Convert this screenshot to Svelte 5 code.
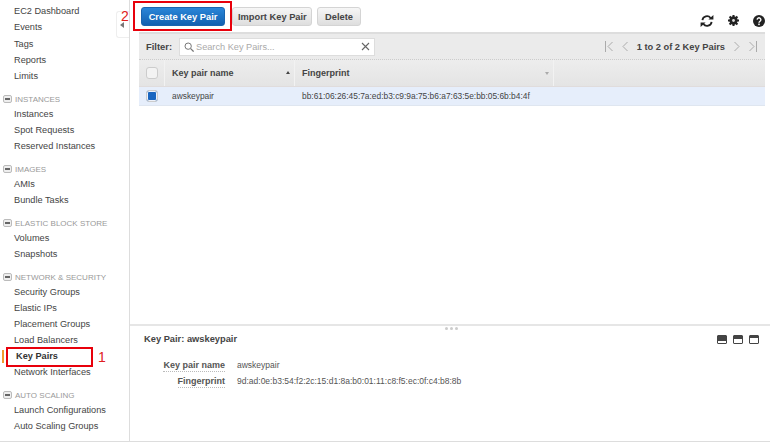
<script>
  const top = ['EC2 Dashboard', 'Events', 'Tags', 'Reports', 'Limits'];
  const sections = [
    { title: 'INSTANCES', items: ['Instances', 'Spot Requests', 'Reserved Instances'] },
    { title: 'IMAGES', items: ['AMIs', 'Bundle Tasks'] },
    { title: 'ELASTIC BLOCK STORE', items: ['Volumes', 'Snapshots'] },
    { title: 'NETWORK & SECURITY', items: ['Security Groups', 'Elastic IPs', 'Placement Groups', 'Load Balancers', 'Key Pairs', 'Network Interfaces'] },
    { title: 'AUTO SCALING', items: ['Launch Configurations', 'Auto Scaling Groups'] }
  ];
</script>

<div class="page">
  <nav class="side">
    <ul class="first">
      {#each top as item}
        <li>{item}</li>
      {/each}
    </ul>
    {#each sections as s}
      <div class="sec"><span class="minus"></span>{s.title}</div>
      <ul>
        {#each s.items as item}
          <li class:active={item === 'Key Pairs'}>
            {item}
            {#if item === 'Key Pairs'}
              <span class="mark"></span>
              <span class="redbox"></span>
              <span class="num one">1</span>
            {/if}
          </li>
        {/each}
      </ul>
    {/each}
    <div class="tab"><span class="tri"></span></div>
  </nav>

  <main>
    <div class="toolbar">
      <div class="btns">
        <button class="primary">Create Key Pair</button>
        <button>Import Key Pair</button>
        <button class="del">Delete</button>
        <span class="redbox2"></span>
        <span class="num two">2</span>
      </div>
      <div class="tools">
        <svg width="14" height="14" viewBox="0 0 14 14">
          <path d="M2.4 6.2A4.6 4.6 0 0 1 10.6 4" fill="none" stroke="#222" stroke-width="1.8"/>
          <path d="M11.6 7.8A4.6 4.6 0 0 1 3.4 10" fill="none" stroke="#222" stroke-width="1.8"/>
          <path d="M8.4 5.4h5V1zM5.6 8.6H.6V13z" fill="#222"/>
        </svg>
        <svg width="11" height="11" viewBox="0 0 14 14">
          <circle cx="7" cy="7" r="3.8" fill="none" stroke="#222" stroke-width="3"/>
          <path d="M7 0v14M0 7h14M2 2l10 10M12 2L2 12" stroke="#222" stroke-width="2.6"/>
          <circle cx="7" cy="7" r="1.8" fill="#ddd"/>
        </svg>
        <svg width="12" height="12" viewBox="0 0 14 14">
          <circle cx="7" cy="7" r="7" fill="#222"/>
          <path d="M4.8 5.4a2.2 2.2 0 1 1 3.4 1.9c-.8.5-1.2.9-1.2 1.7" fill="none" stroke="#fff" stroke-width="1.6"/>
          <rect x="6.1" y="10" width="1.8" height="1.8" fill="#fff"/>
        </svg>
      </div>
    </div>

    <section class="grid">
      <div class="filter">
        <span class="flabel">Filter:</span>
        <div class="search">
          <svg width="10" height="10" viewBox="0 0 12 12">
            <circle cx="5" cy="5" r="3.8" fill="none" stroke="#777" stroke-width="1.2"/>
            <path d="M8 8l3.5 3.5" stroke="#777" stroke-width="1.5"/>
          </svg>
          <span class="ph">Search Key Pairs...</span>
          <svg class="x" width="9" height="9" viewBox="0 0 9 9">
            <path d="M1 1l7 7M8 1L1 8" stroke="#666" stroke-width="1.1"/>
          </svg>
        </div>
        <div class="pager">
          <svg width="8" height="11" viewBox="0 0 8 11"><path d="M.5 0v11M7.5 1L3 5.5 7.5 10" fill="none" stroke="#aaa"/></svg>
          <svg width="6" height="11" viewBox="0 0 6 11"><path d="M5.5 1L1 5.5 5.5 10" fill="none" stroke="#aaa"/></svg>
          <b>1 to 2 of 2 Key Pairs</b>
          <svg width="6" height="11" viewBox="0 0 6 11"><path d="M.5 1L5 5.5.5 10" fill="none" stroke="#aaa"/></svg>
          <svg width="8" height="11" viewBox="0 0 8 11"><path d="M7.5 0v11M.5 1L5 5.5.5 10" fill="none" stroke="#aaa"/></svg>
        </div>
      </div>
      <div class="thead">
        <div class="c0"><span class="chk"></span></div>
        <div class="c1">Key pair name<span class="up"></span></div>
        <div class="c2">Fingerprint<span class="down"></span></div>
      </div>
      <div class="row">
        <div class="c0"><span class="chk on"></span></div>
        <div class="c1">awskeypair</div>
        <div class="c2">bb:61:06:26:45:7a:ed:b3:c9:9a:75:b6:a7:63:5e:bb:05:6b:b4:4f</div>
      </div>
    </section>

    <section class="detail">
      <div class="grip"><i></i><i></i><i></i></div>
      <div class="dhead">
        <h3>Key Pair: awskeypair</h3>
        <div class="panes">
          <span class="pane p1"></span>
          <span class="pane p2"></span>
          <span class="pane p3"></span>
        </div>
      </div>
      <dl>
        <dt><span>Key pair name</span></dt>
        <dd>awskeypair</dd>
        <dt><span>Fingerprint</span></dt>
        <dd>9d:ad:0e:b3:54:f2:2c:15:d1:8a:b0:01:11:c8:f5:ec:0f:c4:b8:8b</dd>
      </dl>
    </section>
  </main>
</div>

<style>
  :global(body) {
    margin: 0;
    background: #fff;
  }
  .page {
    width: 770px;
    height: 441px;
    display: flex;
    border-bottom: 1px solid #ddd;
    font-family: "Liberation Sans", Arial, sans-serif;
    color: #444;
    overflow: hidden;
  }
  .side {
    position: relative;
    width: 129px;
    flex: none;
    border-right: 1px solid #ddd;
    box-sizing: content-box;
    font-size: 9.2px;
  }
  ul {
    list-style: none;
    margin: 0;
    padding: 0;
  }
  .first {
    padding-top: 3px;
  }
  .first li {
    height: 16.25px;
    line-height: 16.25px;
  }
  li {
    position: relative;
    height: 16px;
    line-height: 16px;
    padding-left: 14px;
    white-space: nowrap;
  }
  li.active {
    font-weight: bold;
    color: #333;
    padding-left: 16px;
  }
  .sec {
    display: flex;
    align-items: center;
    height: 14px;
    margin-top: 8px;
    font-size: 8px;
    color: #999;
    padding-left: 3px;
    white-space: nowrap;
  }
  .minus {
    width: 7px;
    height: 6px;
    margin-right: 3px;
    background: #eee;
    border: 1px solid #bbb;
    border-radius: 2px;
    position: relative;
  }
  .minus::after {
    content: '';
    position: absolute;
    left: 1px;
    right: 1px;
    top: 2px;
    height: 2px;
    background: #666;
  }
  .mark {
    position: absolute;
    left: 2px;
    top: 2px;
    width: 2px;
    height: 13px;
    background: #f29a2e;
  }
  .redbox {
    position: absolute;
    left: 6px;
    top: -1px;
    width: 83px;
    height: 16px;
    border: 2px solid #e8000b;
  }
  .num {
    position: absolute;
    color: #e02020;
    font-size: 14px;
    font-weight: normal;
  }
  .one {
    left: 98px;
    top: 1px;
  }
  .tab {
    position: absolute;
    left: 116px;
    top: 11px;
    width: 13px;
    height: 27px;
    background: #fff;
    border: 1px solid #eee;
    border-right: 0;
    border-radius: 3px 0 0 3px;
    display: flex;
    align-items: center;
    padding-left: 3px;
    box-sizing: border-box;
  }
  .tri {
    border: 3.5px solid transparent;
    border-right: 4px solid #777;
    border-left: 0;
  }
  main {
    flex: 1;
    display: flex;
    flex-direction: column;
    min-width: 0;
  }
  .toolbar {
    height: 32px;
    display: flex;
    justify-content: space-between;
    padding: 7px 5px 0 10px;
    box-sizing: border-box;
  }
  .btns {
    position: relative;
    display: flex;
    gap: 5px;
    height: 19px;
    padding-left: 1px;
  }
  button {
    font: bold 9.3px "Liberation Sans", Arial, sans-serif;
    color: #444;
    padding: 0 5px;
    height: 19px;
    width: 80px;
    background: linear-gradient(#f6f6f6, #dedede);
    border: 1px solid #d4d4d4;
    border-radius: 3px;
    white-space: nowrap;
  }
  .primary {
    width: 84px;
    padding: 0;
    margin-right: 2px;
    color: #fff;
    background: linear-gradient(#2a86d8, #1260b0);
    border-color: #1a65b0;
  }
  .del {
    width: 44px;
  }
  .redbox2 {
    position: absolute;
    left: -7px;
    top: -6px;
    width: 95px;
    height: 26px;
    border: 2px solid #e8000b;
  }
  .two {
    left: -19px;
    top: 1px;
  }
  .tools {
    display: flex;
    align-items: center;
    gap: 14px;
    height: 27px;
    margin-right: 0;
  }
  .grid {
    margin-left: 9px;
    margin-right: 5px;
    border-top: 2px solid #ddd;
  }
  .filter {
    height: 25px;
    display: flex;
    align-items: center;
    background: #ebebeb;
    padding: 0 8px 0 7px;
    border-bottom: 1px dotted #ccc;
    font-size: 9.4px;
  }
  .flabel {
    font-weight: bold;
    width: 33px;
  }
  .search {
    height: 16px;
    width: 186px;
    background: #fff;
    border: 1px solid #ddd;
    display: flex;
    align-items: center;
    gap: 2px;
    padding: 0 4px;
  }
  .ph {
    color: #aaa;
    flex: 1;
    font-size: 9.2px;
  }
  .pager {
    margin-left: auto;
    display: flex;
    align-items: center;
    gap: 9px;
    font-size: 9.3px;
    color: #444;
  }
  .thead {
    height: 26px;
    display: flex;
    background: linear-gradient(#ededed, #e4e4e4);
    border-bottom: 1px solid #e0dcdc;
    font-size: 9px;
    font-weight: bold;
    align-items: stretch;
  }
  .c0 {
    width: 26px;
    flex: none;
    display: flex;
    align-items: center;
    justify-content: center;
    box-sizing: border-box;
  }
  .c1 {
    width: 130px;
    flex: none;
    padding-left: 7px;
    box-sizing: border-box;
    display: flex;
    align-items: center;
    position: relative;
  }
  .c2 {
    width: 259px;
    flex: none;
    padding-left: 7px;
    box-sizing: border-box;
    display: flex;
    align-items: center;
    position: relative;
    white-space: nowrap;
  }
  .thead > div {
    border-right: 1px solid #f2f2f2;
  }
  .chk {
    width: 10px;
    height: 10px;
    background: #f3f3f3;
    border: 1px solid #ccc;
    border-radius: 3px;
  }
  .chk.on {
    background: #1a66c0;
    box-shadow: inset 0 0 0 1px #eef2fa;
  }
  .up, .down {
    position: absolute;
    right: 4px;
    border: 2.5px solid transparent;
  }
  .up {
    top: 11px;
    border-top: 0;
    border-bottom: 3px solid #444;
  }
  .down {
    top: 12px;
    border-bottom: 0;
    border-top: 3px solid #aaa;
  }
  .row {
    height: 18px;
    display: flex;
    background: #e6eefb;
    border-bottom: 1px solid #dfe6f0;
    font-size: 8.4px;
    color: #444;
  }
  .detail {
    position: relative;
    margin-top: auto;
    height: 117px;
    flex: none;
    border-top: 2px solid #e6e6e6;
    box-sizing: border-box;
    padding: 0 14px;
  }
  .grip {
    position: absolute;
    left: 315px;
    top: 1px;
    display: flex;
    gap: 2px;
  }
  .grip i {
    width: 3px;
    height: 3px;
    border-radius: 50%;
    background: #ccc;
  }
  .dhead {
    display: flex;
    justify-content: space-between;
    align-items: center;
    margin-top: 5px;
    height: 16px;
  }
  h3 {
    margin: 0;
    font-size: 9.3px;
    font-weight: bold;
    color: #444;
  }
  .panes {
    display: flex;
    gap: 6px;
    margin-right: -3px;
  }
  .pane {
    width: 8px;
    height: 7px;
    border: 1px solid #444;
    border-radius: 1px;
    background: #fff;
  }
  .p1 { background: linear-gradient(#444 70%, #fff 70%); }
  .p2 { background: linear-gradient(#444 45%, #fff 45%); }
  .p3 { background: linear-gradient(#444 25%, #fff 25%); }
  dl {
    margin: 10px 0 0;
    display: grid;
    grid-template-columns: 81px 1fr;
    column-gap: 12px;
    font-size: 8.5px;
    line-height: 16px;
  }
  dt {
    font-size: 9px;
    font-weight: bold;
    text-align: right;
    color: #555;
  }
  dt span {
    border-bottom: 1px dotted #bbb;
    padding-bottom: 1px;
  }
  dd {
    margin: 0;
    color: #555;
  }
</style>
